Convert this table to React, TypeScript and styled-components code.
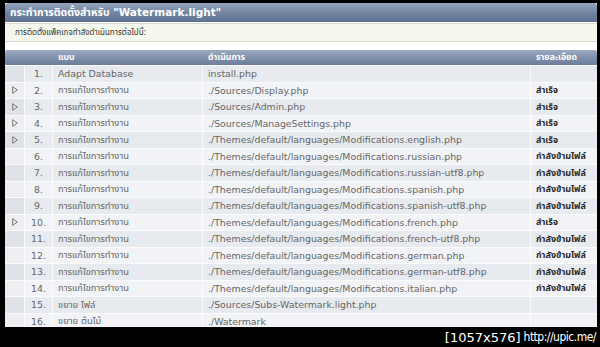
import React from 'react';
import styled, { createGlobalStyle } from 'styled-components';

const GlobalStyle = createGlobalStyle`
  html, body {
    margin: 0;
    padding: 0;
    background: #000;
  }
`;

const FONT = `"DejaVu Sans", "Noto Sans Thai", "Noto Sans", Tahoma, sans-serif`;

const Frame = styled.div`
  width: 600px;
  height: 347px;
  background: #000;
  box-sizing: border-box;
  padding: 3px 3px 0 5px;
  display: flex;
  flex-direction: column;
  overflow: hidden;
  font-family: ${FONT};
`;

const Panel = styled.div`
  height: 324px;
  flex-shrink: 0;
  background: #fff;
  display: flex;
  flex-direction: column;
  overflow: hidden;
`;

const TitleBar = styled.div`
  height: 19px;
  flex-shrink: 0;
  border-radius: 3px 3px 0 0;
  background: linear-gradient(#94a4bb, #71839f 55%, #5f7290);
  color: #fff;
  font-weight: bold;
  font-size: 10.5px;
  display: flex;
  align-items: center;
  padding-left: 5px;
  border-bottom: 1px solid #fff;
  white-space: nowrap;
`;

const InfoBox = styled.div`
  height: 17px;
  flex-shrink: 0;
  background: #f4f7ed;
  border-top: 1px solid #d9dccd;
  border-bottom: 1px solid #d9dccd;
  font-size: 8px;
  color: #333;
  display: flex;
  align-items: center;
  padding-left: 10px;
  margin-bottom: 8px;
`;

const COLS = '19px 27px 149px 327px 1fr';

const HeadRow = styled.div`
  height: 15px;
  flex-shrink: 0;
  display: grid;
  grid-template-columns: ${COLS};
  column-gap: 1px;
  align-items: center;
  border-radius: 2px 2px 0 0;
  background: linear-gradient(#9aaac0, #7e90aa 55%, #6c7e9a);
  color: #fff;
  font-weight: bold;
  font-size: 8.7px;
  border-bottom: 1px solid #fff;
`;

const HeadCell = styled.div`
  padding-left: 5px;
  white-space: nowrap;
`;

const Body = styled.div`
  display: grid;
  grid-template-columns: ${COLS};
  grid-auto-rows: 15.5px;
  gap: 1px;
  background: #fbfbfc;
`;

const Cell = styled.div<{ $odd: boolean; $tone?: 'icon' | 'num'; $bold?: boolean }>`
  background: ${({ $odd, $tone }) =>
    $tone === 'icon' ? ($odd ? '#dfe2e7' : '#eceef2') : $odd ? '#e7eaee' : '#f1f3f6'};
  display: flex;
  align-items: center;
  justify-content: ${({ $tone }) => ($tone ? 'center' : 'flex-start')};
  padding-left: ${({ $tone }) => ($tone ? '0' : '5px')};
  font-size: ${({ $bold }) => ($bold ? '9px' : '9.4px')};
  color: ${({ $bold }) => ($bold ? '#2b2b2b' : '#666')};
  font-weight: ${({ $bold }) => ($bold ? 'bold' : 'normal')};
  white-space: nowrap;
  overflow: hidden;
`;

const Footer = styled.div`
  flex: 1;
  display: flex;
  align-items: center;
  justify-content: flex-end;
  color: #fff;
  font-size: 13px;
  padding-right: 1px;
  white-space: nowrap;
`;

const Site = styled.span`
  font-family: "DejaVu Sans Condensed", "DejaVu Sans", sans-serif;
  font-size: 12px;
  letter-spacing: -0.5px;
  margin-left: 3px;
`;

const Arrow = () => (
  <svg width="6" height="8" viewBox="0 0 6 8">
    <polygon points="0.7,0.7 5.3,4 0.7,7.3" fill="none" stroke="#7a7a7a" strokeWidth="1" />
  </svg>
);

const EDIT = 'การแก้ไขการทำงาน';
const OK = 'สำเร็จ';
const SKIP = 'กำลังข้ามไฟล์';
const LANG = './Themes/default/languages/Modifications.';

const rows: { arrow?: boolean; type: string; action: string; status?: string }[] = [
  { type: 'Adapt Database', action: 'install.php' },
  { arrow: true, type: EDIT, action: './Sources/Display.php', status: OK },
  { arrow: true, type: EDIT, action: './Sources/Admin.php', status: OK },
  { arrow: true, type: EDIT, action: './Sources/ManageSettings.php', status: OK },
  { arrow: true, type: EDIT, action: LANG + 'english.php', status: OK },
  { type: EDIT, action: LANG + 'russian.php', status: SKIP },
  { type: EDIT, action: LANG + 'russian-utf8.php', status: SKIP },
  { type: EDIT, action: LANG + 'spanish.php', status: SKIP },
  { type: EDIT, action: LANG + 'spanish-utf8.php', status: SKIP },
  { arrow: true, type: EDIT, action: LANG + 'french.php', status: OK },
  { type: EDIT, action: LANG + 'french-utf8.php', status: SKIP },
  { type: EDIT, action: LANG + 'german.php', status: SKIP },
  { type: EDIT, action: LANG + 'german-utf8.php', status: SKIP },
  { type: EDIT, action: LANG + 'italian.php', status: SKIP },
  { type: 'ขยาย ไฟล์', action: './Sources/Subs-Watermark.light.php' },
  { type: 'ขยาย ต้นไม้', action: './Watermark' },
];

export default function App() {
  return (
    <>
      <GlobalStyle />
      <Frame>
        <Panel>
          <TitleBar>กระทำการติดตั้งสำหรับ "Watermark.light"</TitleBar>
          <InfoBox>การติดตั้งแพ็คเกจกำลังดำเนินการต่อไปนี้:</InfoBox>
          <HeadRow>
            <HeadCell />
            <HeadCell />
            <HeadCell>แบบ</HeadCell>
            <HeadCell>ดำเนินการ</HeadCell>
            <HeadCell>รายละเอียด</HeadCell>
          </HeadRow>
          <Body>
            {rows.map((r, i) => {
              const odd = i % 2 === 0;
              return (
                <React.Fragment key={i}>
                  <Cell $odd={odd} $tone="icon">{r.arrow && <Arrow />}</Cell>
                  <Cell $odd={odd} $tone="num">{i + 1}.</Cell>
                  <Cell $odd={odd}>{r.type}</Cell>
                  <Cell $odd={odd}>{r.action}</Cell>
                  <Cell $odd={odd} $bold>{r.status}</Cell>
                </React.Fragment>
              );
            })}
          </Body>
        </Panel>
        <Footer>
          [1057x576]<Site>http://upic.me/</Site>
        </Footer>
      </Frame>
    </>
  );
}
